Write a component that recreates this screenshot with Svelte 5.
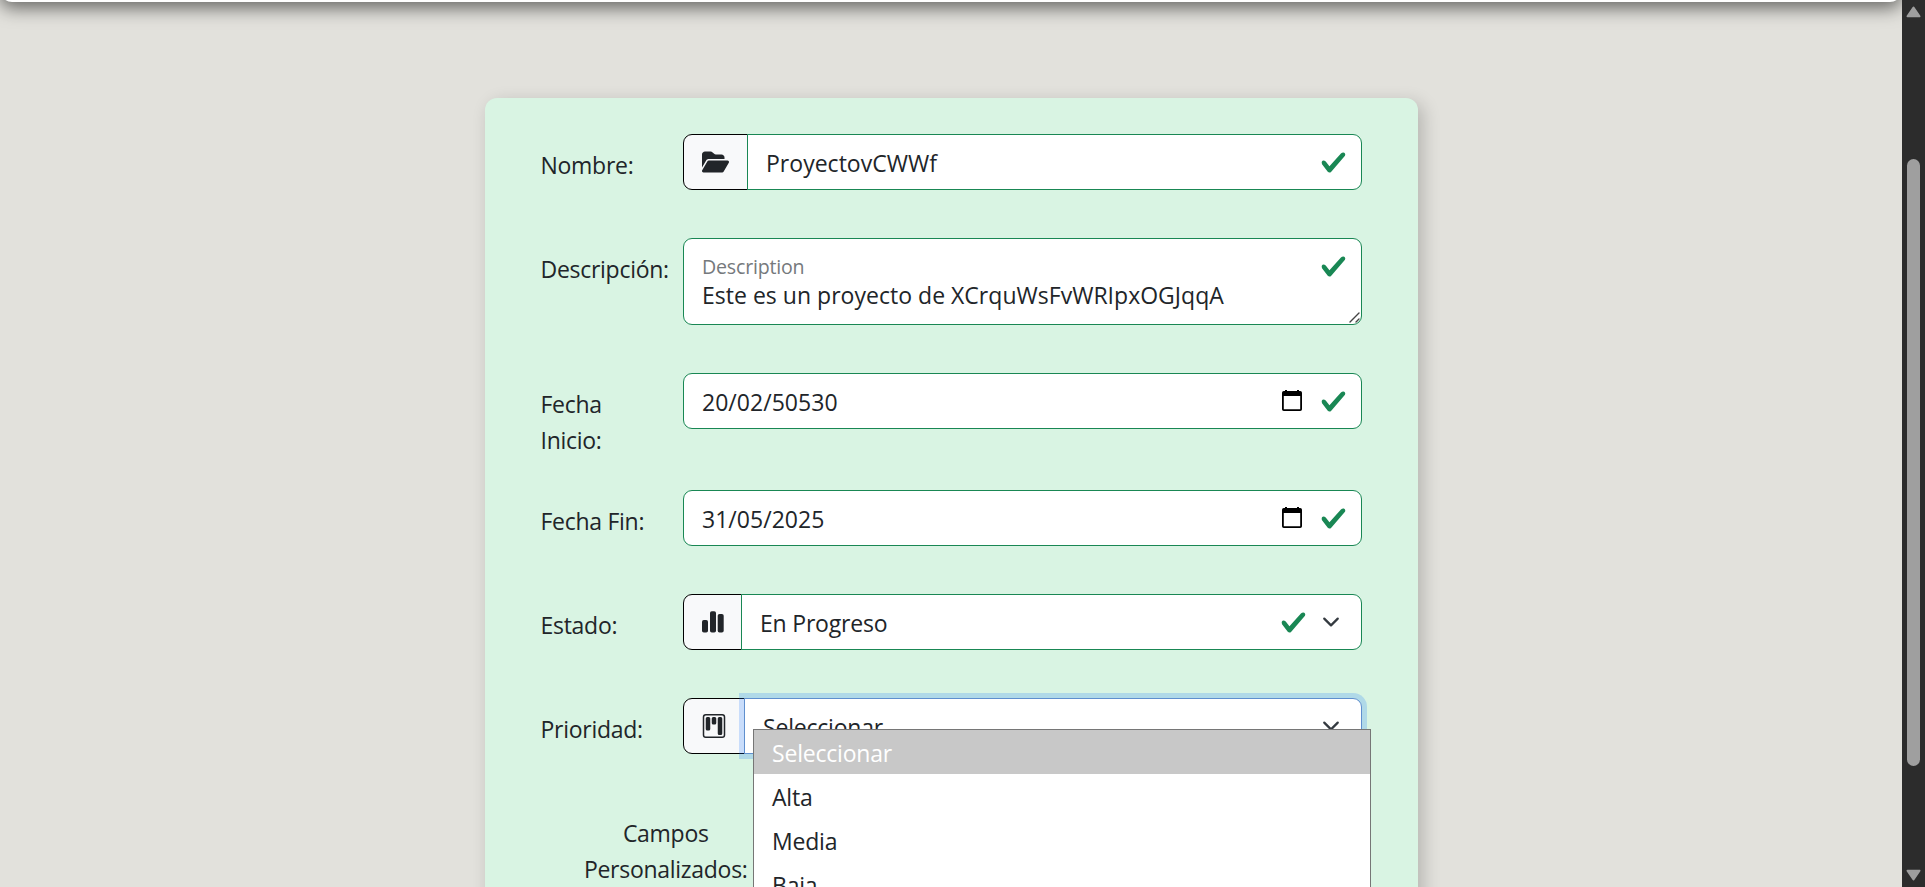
<script>
  const options = ['Seleccionar', 'Alta', 'Media', 'Baja'];
</script>

{#snippet check()}
  <svg class="check" viewBox="0 0 8 8"><path fill="#198754" d="M2.3 6.73.6 4.53c-.4-1.04.46-1.4 1.1-.8l1.1 1.4 3.4-3.8c.6-.63 1.6-.27 1.2.7l-4 4.6c-.43.5-.8.4-1.1.1z" /></svg>
{/snippet}

{#snippet calendar()}
  <svg class="calendar" viewBox="0 0 20 21"><path d="M3 0h2v1h10V0h2v1h1.2A1.8 1.8 0 0 1 20 2.8v16.4a1.8 1.8 0 0 1-1.8 1.8H1.8A1.8 1.8 0 0 1 0 19.2V2.8A1.8 1.8 0 0 1 1.8 1H3zM1.8 6v13.2h16.4V6z" fill-rule="evenodd" /></svg>
{/snippet}

{#snippet chevron()}
  <svg class="chevron" viewBox="0 0 16 16"><path fill="none" stroke="#343a40" stroke-linecap="round" stroke-linejoin="round" stroke-width="2" d="m2 5 6 6 6-6" /></svg>
{/snippet}

<div class="screen">
  <main>
    <header></header>
    <form class="card">
      <div class="label">Nombre:</div>
      <div class="group">
        <div class="prefix folder">
          <svg width="27" height="24" viewBox="0 0 576 512"><path fill="currentColor" d="M88.7 223.8L0 375.8V96C0 60.7 28.7 32 64 32H181.5c17 0 33.3 6.7 45.3 18.7l26.5 26.5c12 12 28.3 18.7 45.3 18.7H416c35.3 0 64 28.7 64 64v32H144c-22.8 0-43.8 12.1-55.3 31.8zm27.6 16.1C122.1 230 132.6 224 144 224H544c11.5 0 22 6.1 27.7 16.1s5.7 22.2-.1 32.1l-112 192C453.9 474 443.4 480 432 480H32c-11.5 0-22-6.1-27.7-16.1s-5.7-22.2 .1-32.1l112-192z" /></svg>
        </div>
        <div class="control joined"><span class="value name">ProyectovCWWf</span>{@render check()}</div>
      </div>

      <div class="label">Descripción:</div>
      <div class="control area">
        <div class="lines"><small>Description</small><span class="long">Este es un proyecto de XCrquWsFvWRIpxOGJqqA</span></div>
        {@render check()}
        <svg class="grip" viewBox="0 0 11 11"><path d="M1 10 10 1M7 10l3-3" stroke="#444" stroke-width="1.4" stroke-linecap="round" /></svg>
      </div>

      <div class="label">Fecha<br />Inicio:</div>
      <div class="control"><span class="value date">20/02/50530</span>{@render calendar()}{@render check()}</div>

      <div class="label">Fecha Fin:</div>
      <div class="control"><span class="value date">31/05/2025</span>{@render calendar()}{@render check()}</div>

      <div class="label">Estado:</div>
      <div class="group">
        <div class="prefix bars">
          <svg width="22" height="22" viewBox="0 0 22 22" fill="currentColor"><rect x="0" y="9" width="6" height="12.5" rx="1.8" /><rect x="8" y="0.3" width="6" height="21.2" rx="1.8" /><rect x="15.7" y="3" width="6" height="18.5" rx="1.8" /></svg>
        </div>
        <div class="control joined"><span class="value">En Progreso</span>{@render check()}{@render chevron()}</div>
      </div>

      <div class="label">Prioridad:</div>
      <div class="group">
        <div class="prefix board">
          <svg width="24" height="24" viewBox="0 0 16 16" fill="currentColor"><path d="M13.5 1a1 1 0 0 1 1 1v12a1 1 0 0 1-1 1h-11a1 1 0 0 1-1-1V2a1 1 0 0 1 1-1zm-11-1a2 2 0 0 0-2 2v12a2 2 0 0 0 2 2h11a2 2 0 0 0 2-2V2a2 2 0 0 0-2-2z" /><path d="M6.5 3a1 1 0 0 1 1-1h1a1 1 0 0 1 1 1v3a1 1 0 0 1-1 1h-1a1 1 0 0 1-1-1zm-4 0a1 1 0 0 1 1-1h1a1 1 0 0 1 1 1v7a1 1 0 0 1-1 1h-1a1 1 0 0 1-1-1zm8 0a1 1 0 0 1 1-1h1a1 1 0 0 1 1 1v10a1 1 0 0 1-1 1h-1a1 1 0 0 1-1-1z" /></svg>
        </div>
        <div class="control joined focus"><span class="value">Seleccionar</span>{@render chevron()}</div>
        <div class="menu">
          {#each options as option, i}
            <div class="option" class:active={i === 0}>{option}</div>
          {/each}
        </div>
      </div>

      <div class="label custom">Campos<br />Personalizados:</div>
    </form>
  </main>
  <aside class="scrollbar">
    <svg viewBox="0 0 15 12"><path d="M7.5 1.5 13.5 10.3H1.5z" fill="#9f9f9f" stroke="#9f9f9f" stroke-width="2" stroke-linejoin="round" /></svg>
    <div class="track"><div class="thumb"></div></div>
    <svg viewBox="0 0 15 12"><path d="M7.5 10.5 13.5 1.7H1.5z" fill="#9f9f9f" stroke="#9f9f9f" stroke-width="2" stroke-linejoin="round" /></svg>
  </aside>
</div>

<style>
  :global(body) { margin: 0; overflow: hidden; }
  .screen {
    display: flex;
    width: 1925px;
    height: 887px;
    overflow: hidden;
    background: #e2e1dc;
    color: #212529;
    font-family: "Open Sans", "Noto Sans", sans-serif;
    font-size: 23px;
    line-height: 36px;
    letter-spacing: -0.2px;
    white-space: nowrap;
  }
  .screen * { box-sizing: border-box; }
  main { flex: 1; height: 887px; overflow: hidden; }
  header {
    height: 40px;
    margin-top: -38px;
    border-radius: 0 0 12px 12px;
    background: #fff;
    box-shadow: 0 6px 18px rgba(0, 0, 0, 0.55);
  }
  .card {
    display: grid;
    grid-template-columns: 143px 679px;
    grid-template-rows: 56px 87px 69px 56px 56px 56px 84px;
    row-gap: 48px;
    width: 933px;
    height: 900px;
    margin: 96px 0 0 485px;
    padding: 36px 56px 0 55px;
    border-radius: 12px;
    background: #d9f4e3;
    box-shadow: 5px 5px 18px rgba(0, 0, 0, 0.2);
  }
  .label { padding: 13px 0 0 0.5px; letter-spacing: -0.28px; }
  .custom { grid-column: 1 / -1; width: 251px; text-align: center; }
  .group { position: relative; display: flex; height: 56px; }
  .prefix {
    display: flex;
    align-items: center;
    height: 56px;
    padding-left: 18px;
    border: 1px solid #000;
    border-radius: 9px 0 0 9px;
    background: #f8f9fa;
  }
  .folder { width: 65px; }
  .bars { width: 59px; }
  .board { width: 62px; }
  .control {
    display: flex;
    align-items: center;
    height: 56px;
    padding: 0 14px 0 18px;
    border: 1px solid #198754;
    border-radius: 9px;
    background: #fff;
  }
  .joined { flex: 1; margin-left: -1px; border-radius: 0 9px 9px 0; }
  .value { flex: 1; padding-top: 1px; }
  .name { letter-spacing: 0.02px; }
  .date { letter-spacing: 0.03px; }
  .area { position: relative; height: 87px; align-items: flex-start; padding-top: 13px; }
  .area .check { margin-top: 1px; }
  .lines { flex: 1; display: flex; flex-direction: column; }
  small { color: #75797c; font-size: 19.6px; line-height: 29px; }
  .long { line-height: 29px; letter-spacing: 0.02px; }
  .check { width: 27px; height: 27px; }
  .calendar { width: 20px; height: 21px; margin: 0 18px 2px 0; }
  .chevron { width: 24px; height: 18px; margin: 0 4px 0 12px; }
  .grip { position: absolute; right: 1px; bottom: 1px; width: 11px; height: 11px; }
  .focus { z-index: 1; border-color: #5f8fce; box-shadow: 0 0 0 5px rgba(13, 110, 253, 0.2); }
  .menu {
    position: absolute;
    z-index: 2;
    top: 31px;
    left: 70px;
    width: 618px;
    border: 1px solid #767676;
    background: #fff;
  }
  .option { height: 44px; padding-left: 18px; line-height: 46px; }
  .active { background: #c8c8c8; color: #fff; }
  .scrollbar {
    display: flex;
    flex-direction: column;
    align-items: center;
    width: 23px;
    height: 887px;
    padding: 6px 0;
    background: #2c2c2c;
  }
  .scrollbar svg { width: 15px; height: 12px; }
  .track { flex: 1; padding-top: 141px; }
  .thumb { width: 13px; height: 607px; border-radius: 7px; background: #9f9f9f; }
</style>
